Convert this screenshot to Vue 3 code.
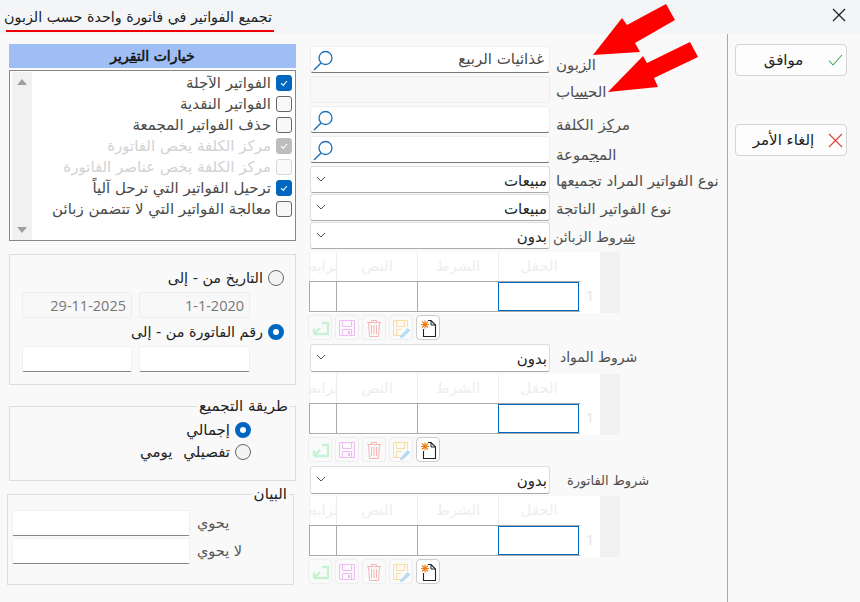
<script setup>
const options = [
  { text: 'الفواتير الآجلة', checked: true },
  { text: 'الفواتير النقدية' },
  { text: 'حذف الفواتير المجمعة' },
  { text: 'مركز الكلفة يخص الفاتورة', checked: true, disabled: true },
  { text: 'مركز الكلفة يخص عناصر الفاتورة', disabled: true },
  { text: 'ترحيل الفواتير التي ترحل آلياً', checked: true },
  { text: 'معالجة الفواتير التي لا تتضمن زبائن' },
]
const conditions = [
  { title: 'شروط المواد', pad: 'p7' },
  { title: 'شروط الفاتورة', pad: 'p14' },
]
const headers = ['الرابط', 'النص', 'الشرط', 'الحقل']
</script>

<template>
  <div class="window">
    <header class="titlebar">
      <span class="title" dir="rtl">تجميع الفواتير في فاتورة واحدة حسب الزبون</span>
      <svg class="close" width="14" height="14" viewBox="0 0 14 14"><path d="M1 1L13 13M13 1L1 13" stroke="#222" stroke-width="1.3" fill="none"/></svg>
    </header>

    <div class="body">
      <aside class="left">
        <h2 class="options-head" dir="rtl">خيارات الت<u>ق</u>رير</h2>
        <div class="listbox">
          <div class="scroll">
            <i class="tri up"></i>
            <i class="tri down"></i>
          </div>
          <ul class="options" dir="rtl">
            <li v-for="o in options" :key="o.text" :class="{ off: o.disabled }">
              <span class="check" :class="{ on: o.checked }">
                <svg v-if="o.checked" width="10" height="10" viewBox="0 0 10 10"><path d="M2 5.2L4.2 7.4L8 3" stroke="#fff" stroke-width="1.1" fill="none"/></svg>
              </span>
              <span>{{ o.text }}</span>
            </li>
          </ul>
        </div>

        <section class="range" dir="rtl">
          <label class="radio-line first"><i class="radio"></i>التاريخ من - إلى</label>
          <div class="pair">
            <div class="field off small">1-1-2020</div>
            <div class="field off large">29-11-2025</div>
          </div>
          <label class="radio-line"><i class="radio on"></i>رقم الفاتورة من - إلى</label>
          <div class="pair">
            <div class="field small"></div>
            <div class="field large"></div>
          </div>
        </section>

        <fieldset class="group method" dir="rtl">
          <legend>طريقة التجميع</legend>
          <label class="radio-line"><i class="radio on"></i>إجمالي</label>
          <label class="radio-line"><i class="radio"></i>تفصيلي يومي</label>
        </fieldset>

        <fieldset class="group statement" dir="rtl">
          <legend>البيان</legend>
          <div class="st-row"><span class="st-label">يحوي</span><div class="field st"></div></div>
          <div class="st-row"><span class="st-label">لا يحوي</span><div class="field st"></div></div>
        </fieldset>
      </aside>

      <main class="middle">
        <div class="form-row">
          <div class="box search"><svg class="lens" width="22" height="22" viewBox="0 0 22 22"><circle cx="13.5" cy="8" r="6.500" fill="none" stroke="#1f6fb5" stroke-width="1.3"/><path d="M9 13L2 20" stroke="#1f6fb5" stroke-width="1.4"/></svg><span class="value">غذائيات الربيع</span></div>
          <span class="label low" dir="rtl">ال<u>ز</u>بون</span>
        </div>
        <div class="form-row">
          <div class="box blank"></div>
          <span class="label low2" dir="rtl">الح<u>س</u>اب</span>
        </div>
        <div class="form-row">
          <div class="box search"><svg class="lens" width="22" height="22" viewBox="0 0 22 22"><circle cx="13.5" cy="8" r="6.500" fill="none" stroke="#1f6fb5" stroke-width="1.3"/><path d="M9 13L2 20" stroke="#1f6fb5" stroke-width="1.4"/></svg></div>
          <span class="label low" dir="rtl">مر<u>ك</u>ز الكلفة</span>
        </div>
        <div class="form-row">
          <div class="box search"><svg class="lens" width="22" height="22" viewBox="0 0 22 22"><circle cx="13.5" cy="8" r="6.500" fill="none" stroke="#1f6fb5" stroke-width="1.3"/><path d="M9 13L2 20" stroke="#1f6fb5" stroke-width="1.4"/></svg></div>
          <span class="label low" dir="rtl">الم<u>ج</u>موعة</span>
        </div>
        <div class="form-row">
          <div class="box combo"><svg class="chev" width="10" height="6" viewBox="0 0 10 6"><path d="M1 1L5 5L9 1" stroke="#555" fill="none"/></svg><span class="value dark">مبيعات</span></div>
          <span class="label nudge" dir="rtl">نوع الفواتير المراد تجميعها</span>
        </div>
        <div class="form-row tight">
          <div class="box combo"><svg class="chev" width="10" height="6" viewBox="0 0 10 6"><path d="M1 1L5 5L9 1" stroke="#555" fill="none"/></svg><span class="value dark">مبيعات</span></div>
          <span class="label nudge" dir="rtl">نوع الفواتير الناتجة</span>
        </div>
        <div class="form-row tight">
          <div class="box combo"><svg class="chev" width="10" height="6" viewBox="0 0 10 6"><path d="M1 1L5 5L9 1" stroke="#555" fill="none"/></svg><span class="value dark">بدون</span></div>
          <span class="label back nudge" dir="rtl"><u>ش</u>روط الزبائن</span>
        </div>

        <template v-for="(c, i) in [null, ...conditions]" :key="i">
          <div v-if="c" class="form-row cond">
            <div class="box combo"><svg class="chev" width="10" height="6" viewBox="0 0 10 6"><path d="M1 1L5 5L9 1" stroke="#555" fill="none"/></svg><span class="value dark">بدون</span></div>
            <span class="label" :class="c.pad" dir="rtl">{{ c.title }}</span>
          </div>
          <div class="grid-wrap">
            <div class="grid-main">
              <div class="grid-head" dir="ltr">
                <span v-for="h in headers" :key="h" class="gh"><span dir="rtl">{{ h }}</span></span>
              </div>
              <div class="grid-row">
                <span class="gc"></span><span class="gc"></span><span class="gc"></span><span class="gc active"></span>
              </div>
            </div>
            <div class="grid-num">1</div>
            <div class="grid-side"></div>
          </div>
          <div class="tools">
            <button class="tool faded"><svg width="22" height="23" viewBox="0 0 22 23"><path d="M5 18H19V7H13M5 18L11 12M5 18V12.500M5 18H10.500" stroke="#c6f1d2" stroke-width="2.400" fill="none"/></svg></button>
            <button class="tool faded"><svg width="22" height="23" viewBox="0 0 22 23"><path d="M3.500 4.500H18.500V19.500H3.500ZM6.500 4.500V10.500H15.500V4.500M6.500 19.500V13.500H15.500V19.500" stroke="#f0b8f5" stroke-width="1" fill="none"/><rect x="12" y="15" width="2" height="3" fill="#f0b8f5"/></svg></button>
            <button class="tool faded"><svg width="22" height="23" viewBox="0 0 22 23"><path d="M4 6.500H18M8.500 6.500V4.500H13.500V6.500M5.500 6.500L6.500 20.500H15.500L16.500 6.500M8.500 9V18M11 9V18M13.500 9V18" stroke="#f7b5b5" fill="none"/></svg></button>
            <button class="tool faded"><svg width="22" height="23" viewBox="0 0 22 23"><path d="M3.500 4.500H17.500V11M3.500 4.500V19.500H11M6.500 4.500V10.500H14.500V4.500M6.500 19.500V13.500H11" stroke="#f8dca0" fill="none"/><path d="M10 20.500L17.500 12L20.500 14.500L13 21.500L10 22Z" fill="#b4dcf6"/></svg></button>
            <button class="tool"><svg width="22" height="23" viewBox="0 0 22 23"><path d="M6.500 13V20.500H18.500V9L14 4.500H11" stroke="#222" stroke-width="1.100" fill="none"/><path d="M14 4.500V9H18.500" stroke="#222" fill="none"/><path d="M8 4.500V12.500M4 8.500H12M5 5.500L11 11.500M11 5.500L5 11.500" stroke="#ea7a12" stroke-width="1.100"/></svg></button>
          </div>
        </template>
      </main>

      <div class="divider"></div>

      <aside class="actions">
        <button class="action">
          <span class="action-text" dir="rtl">موافق</span>
          <svg width="15" height="12" viewBox="0 0 15 12"><path d="M1 6.500L5 11L14 1" stroke="#3fa65a" stroke-width="1.100" fill="none"/></svg>
        </button>
        <button class="action">
          <span class="action-text" dir="rtl">إلغاء الأمر</span>
          <svg width="15" height="15" viewBox="0 0 15 15"><path d="M1 1L14 14M14 1L1 14" stroke="#e0403a" stroke-width="1.100" fill="none"/></svg>
        </button>
      </aside>
    </div>

    <svg class="arrows" width="860" height="110" viewBox="0 0 860 110">
      <polygon points="593,55 622,18 627,25 666,4 675,20 635,43 640,52" fill="#ff0000"/>
      <polygon points="608,92 643,56 647,63 690,42 698,57 654,78 658,87" fill="#ff0000"/>
    </svg>
  </div>
</template>

<style>
html, body { margin: 0; background: #f9f9f9; }
</style>

<style scoped>
.window {
  position: relative;
  width: 860px;
  height: 602px;
  overflow: hidden;
  background: #f9f9f9;
  color: #333;
  font-family: "DejaVu Sans", sans-serif;
  font-size: 15px;
}
.titlebar {
  height: 34px;
  background: #f3f5f7;
  display: flex;
  align-items: flex-start;
  justify-content: space-between;
  box-sizing: border-box;
  padding: 8px 14px 0 6px;
}
.title {
  display: block;
  width: 268px;
  height: 24px;
  box-sizing: border-box;
  padding-right: 2px;
  line-height: 18px;
  font-size: 14.3px;
  color: #222;
  white-space: nowrap;
  border-bottom: 2px solid #ee0000;
}
.body { display: flex; height: 568px; }

.left { width: 287px; margin-left: 9px; padding-top: 10px; flex: none; }
.options-head {
  height: 24px;
  margin: 0;
  background: #9fbef5;
  font-size: 14px;
  font-weight: normal;
  -webkit-text-stroke: 0.5px #111;
  line-height: 24px;
  text-align: center;
  color: #111;
}
.listbox {
  display: flex;
  height: 171px;
  box-sizing: border-box;
  margin-top: 2px;
  border: 1px solid #888;
  background: #fff;
  padding: 1px 3px 0 2px;
}
.scroll {
  width: 20px;
  height: 168px;
  background: #f1f1f1;
  flex: none;
  display: flex;
  flex-direction: column;
  justify-content: space-between;
  align-items: center;
  padding: 7px 0;
  box-sizing: border-box;
}
.tri { width: 0; height: 0; border-left: 5px solid transparent; border-right: 5px solid transparent; }
.tri.up { border-bottom: 6px solid #a0a0a0; }
.tri.down { border-top: 6px solid #a0a0a0; }
.options { flex: 1; margin: 0; padding: 0; list-style: none; }
.options li {
  height: 21px;
  display: flex;
  align-items: center;
  gap: 5px;
  white-space: nowrap;
  color: #4a4a4a;
}
.options li.off { color: #d2d2d2; }
.check {
  width: 14px;
  height: 14px;
  border: 1px solid #666;
  border-radius: 3px;
  background: #f8f8f8;
  flex: none;
  display: flex;
  align-items: center;
  justify-content: center;
}
.check.on { background: #0067c0; border-color: #0067c0; }
.off .check { border-color: #d8d8d8; background: #fafafa; }
.off .check.on { background: #bdbdbd; border-color: #bdbdbd; }

.range {
  height: 131px;
  box-sizing: border-box;
  margin-top: 13px;
  border: 1px solid #ddd;
  padding: 13px 11px 0 0;
}
.radio-line {
  display: flex;
  align-items: center;
  gap: 5px;
  height: 20px;
  color: #222;
  white-space: nowrap;
}
.range .radio-line { font-size: 14.4px; }
.radio {
  width: 14px;
  height: 14px;
  border: 1px solid #666;
  border-radius: 50%;
  background: #f4f4f4;
  flex: none;
}
.radio.on { width: 6px; height: 6px; border: 5px solid #0067c0; background: #fff; }
.pair { display: flex; gap: 7px; margin: 4px 34px 0 0; }
.range .pair + .radio-line { margin-top: 4px; }
.field {
  height: 26px;
  box-sizing: border-box;
  border: 1px solid #f0f0f0;
  border-bottom: 1px solid #888;
  border-radius: 2px;
  background: #fff;
  line-height: 25px;
  padding: 0 5px;
}
.field.off {
  background: #f8f8f8;
  border-color: #eee;
  color: #777;
  font-family: "Open Sans", sans-serif;
  font-size: 14.5px;
}
.field.small { width: 111px; }
.field.large { width: 110px; }

.group {
  margin: 0;
  padding: 0;
  min-width: 0;
  box-sizing: border-box;
  border: 1px solid #ddd;
}
.group legend {
  padding: 0 2px;
  margin-right: 5px;
  color: #222;
  line-height: 18px;
  height: 18px;
}
.method { height: 84px; margin-top: 12px; }
.method .radio-line { height: 22px; margin: 0 44px 0 0; position: relative; top: 4px; word-spacing: 6px; }
.statement { width: 287px; height: 100px; margin: 4px 0 0 -2px; padding: 7px 0 0 4px; }
.statement legend { margin-right: 4px; }
.st-row { display: flex; align-items: center; gap: 7px; margin-bottom: 2px; direction: ltr; flex-direction: row-reverse; justify-content: flex-end; }
.field.st { width: 178px; }
.st-label { color: #555; direction: rtl; font-size: 14.5px; }

.middle { width: 417px; margin-left: 14px; padding-top: 12px; flex: none; }
.form-row { display: flex; height: 27px; margin-bottom: 3px; align-items: center; gap: 6px; }
.form-row.tight { margin-top: -2px; }
.form-row.cond { height: 28px; margin-top: 4px; margin-bottom: 2px; }
.box {
  width: 240px;
  height: 27px;
  box-sizing: border-box;
  flex: none;
  border: 1px solid #eee;
  border-radius: 3px;
  background: #fff;
  display: flex;
  align-items: center;
  justify-content: space-between;
}
.form-row.cond .box { height: 28px; }
.box.search { border-bottom: 1px solid #777; padding: 0 5px 0 1px; }
.box.blank { background: #f8f8f8; }
.box.combo { border-color: #ddd; border-bottom-color: #aaa; padding: 0 2px 0 5px; align-items: flex-start; }
.chev { margin-top: 9px; }
.lens { margin-top: 2px; }
.value { direction: rtl; color: #4a4a4a; line-height: 25px; }
.value.dark { color: #222; line-height: 28px; }
.label { white-space: nowrap; color: #4f4f4f; }
.label.low { padding-top: 10px; }
.label.low2 { padding-top: 4px; }
.label.nudge { padding-top: 2px; }
.label.back { margin-left: -3px; font-size: 14px; }
.label.p7 { margin-left: 4px; padding-bottom: 2px; font-size: 14px; }
.label.p14 { margin-left: 11px; font-size: 13px; }

.grid-wrap { display: flex; height: 61px; width: 311px; margin-left: -1px; }
.grid-main { width: 271px; background: #fff; }
.grid-head { display: grid; grid-template-columns: 27px 81px 81px 81px; height: 29px; }
.gh {
  display: flex;
  justify-content: center;
  font-size: 15px;
  color: #eee;
  line-height: 28px;
  border-left: 1px solid #eee;
  overflow: hidden;
  white-space: nowrap;
}
.gh > span { flex: none; }
.grid-row {
  display: grid;
  grid-template-columns: 27px 81px 81px 81px;
  height: 31px;
  box-sizing: border-box;
  border-top: 1px solid #aaa;
  border-bottom: 1px solid #aaa;
}
.gc { border-left: 1px solid #aaa; }
.gc.active { border: 1px solid #0067c0; }
.grid-num {
  width: 20px;
  background: #fff;
  color: #e4e4e4;
  font-family: "Open Sans", sans-serif;
  font-size: 15px;
  text-align: center;
  line-height: 86px;
}
.grid-side { width: 20px; background: #f1f1f1; }

.tools { display: flex; gap: 3px; height: 25px; margin: 2px 0 0 -2px; }
.tool {
  width: 24px;
  height: 25px;
  padding: 0;
  box-sizing: border-box;
  background: #fff;
  border: 1px solid #ccc;
  border-radius: 4px;
  display: flex;
  align-items: center;
  justify-content: center;
}
.tool.faded { background: #fafafa; border-color: #eee; }

.divider { width: 1px; background: #aaa; flex: none; }
.actions { margin-left: 7px; padding-top: 10px; display: flex; flex-direction: column; gap: 48px; }
.action {
  width: 112px;
  height: 32px;
  box-sizing: border-box;
  background: #fdfdfd;
  border: 1px solid #d4d4d4;
  border-radius: 4px;
  display: flex;
  align-items: center;
  padding: 0 3px 0 3px;
  font-family: inherit;
  font-size: 15px;
  color: #222;
}
.action-text { flex: 1; text-align: center; }
.arrows { position: absolute; left: 0; top: 0; pointer-events: none; }
u { text-underline-offset: 1px; }
</style>
